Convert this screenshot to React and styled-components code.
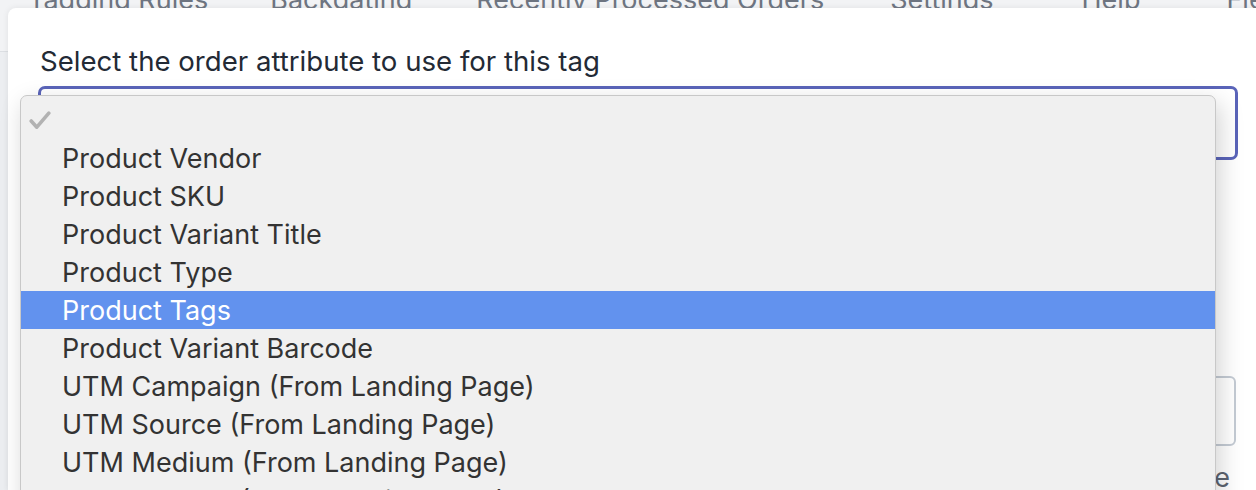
import React from "react";
import styled, { createGlobalStyle } from "styled-components";

const GlobalStyle = createGlobalStyle`
  html, body {
    margin: 0;
    padding: 0;
    overflow: hidden;
  }
  body {
    background: linear-gradient(to bottom, #f2f3f5 0, #f2f3f5 51px, #dcdfe3 51px, #dcdfe3 52px, #eceef1 52px);
    font-family: Inter, "Noto Sans", "Liberation Sans", sans-serif;
  }
`;

// space after each tab, as it sits in the page behind the modal
const tabs = [
  { label: "Tagging Rules", gap: 62 },
  { label: "Backdating", gap: 64 },
  { label: "Recently Processed Orders", gap: 66 },
  { label: "Settings", gap: 88 },
  { label: "Help", gap: 86 },
  { label: "Fields", gap: 0 },
];

const options = [
  "Product Vendor",
  "Product SKU",
  "Product Variant Title",
  "Product Type",
  "Product Tags",
  "Product Variant Barcode",
  "UTM Campaign (From Landing Page)",
  "UTM Source (From Landing Page)",
  "UTM Medium (From Landing Page)",
  "UTM Content (From Landing Page)",
];

export default function App() {
  return (
    <Page>
      <GlobalStyle />
      <TabBar>
        {tabs.map((t) => (
          <Tab key={t.label} gap={t.gap}>
            {t.label}
          </Tab>
        ))}
      </TabBar>
      <Modal>
        <Label>Select the order attribute to use for this tag</Label>
        <SelectWrap>
          <SelectBox />
          <Menu>
            <CheckRow>
              <svg width="22" height="19" viewBox="0 0 22 19">
                <path
                  d="M2.2 10 L7.8 16.2 L19.8 2.2"
                  fill="none"
                  stroke="#b2b2b2"
                  strokeWidth="3.6"
                  strokeLinecap="round"
                  strokeLinejoin="round"
                />
              </svg>
            </CheckRow>
            {options.map((o) => (
              <Option key={o} active={o === "Product Tags"}>
                {o}
              </Option>
            ))}
          </Menu>
        </SelectWrap>
        <Label>Tag value</Label>
        <Input />
        <Hint>Leave this field blank to tag with the full attribute value</Hint>
      </Modal>
    </Page>
  );
}

const Page = styled.div`
  height: 490px;
  overflow: hidden;
`;

const TabBar = styled.div`
  display: flex;
  height: 8px;
  overflow: hidden;
  padding-left: 28px;
  white-space: nowrap;
`;

const Tab = styled.div`
  margin-top: -13px;
  margin-right: ${(p) => p.gap}px;
  font-size: 27px;
  line-height: 26px;
  color: #6d7480;
`;

const Modal = styled.div`
  margin-left: 8px;
  width: 1300px;
  height: 482px;
  box-sizing: border-box;
  padding: 37px 0 0 30px;
  background: #fff;
  border-top-left-radius: 8px;
  box-shadow: 0 0 6px rgba(0, 0, 0, 0.08);
`;

const Label = styled.div`
  font-size: 27.6px;
  line-height: 32px;
  color: #232a35;
  padding-left: 2px;
  margin-bottom: 9px;
`;

const SelectWrap = styled.div`
  position: relative;
  width: 1200px;
  margin-bottom: 175px;
`;

const SelectBox = styled.div`
  height: 74px;
  box-sizing: border-box;
  border: 3px solid #5a64b9;
  border-radius: 7px;
  background: #fff;
`;

const Menu = styled.div`
  position: absolute;
  left: -18px;
  top: 9px;
  width: 1196px;
  box-sizing: border-box;
  padding-top: 5px;
  background: #f0f0f0;
  border: 1px solid #c8c8c8;
  border-radius: 7px;
  box-shadow: 4px 8px 24px rgba(0, 0, 0, 0.18);
  z-index: 2;
`;

const CheckRow = styled.div`
  height: 38px;
  display: flex;
  align-items: center;
  padding-left: 8px;
`;

const Option = styled.div`
  height: 38px;
  line-height: 39px;
  padding-left: 41px;
  font-size: 27px;
  color: ${(p) => (p.active ? "#fff" : "#333")};
  background: ${(p) => (p.active ? "#6292ee" : "transparent")};
  white-space: nowrap;
`;

const Input = styled.div`
  width: 1198px;
  height: 70px;
  box-sizing: border-box;
  border: 2px solid #c4cbd4;
  border-radius: 6px;
`;

const Hint = styled.div`
  width: 1192px;
  margin-top: 16px;
  text-align: right;
  font-size: 27px;
  line-height: 32px;
  color: #5d6470;
  white-space: nowrap;
`;
